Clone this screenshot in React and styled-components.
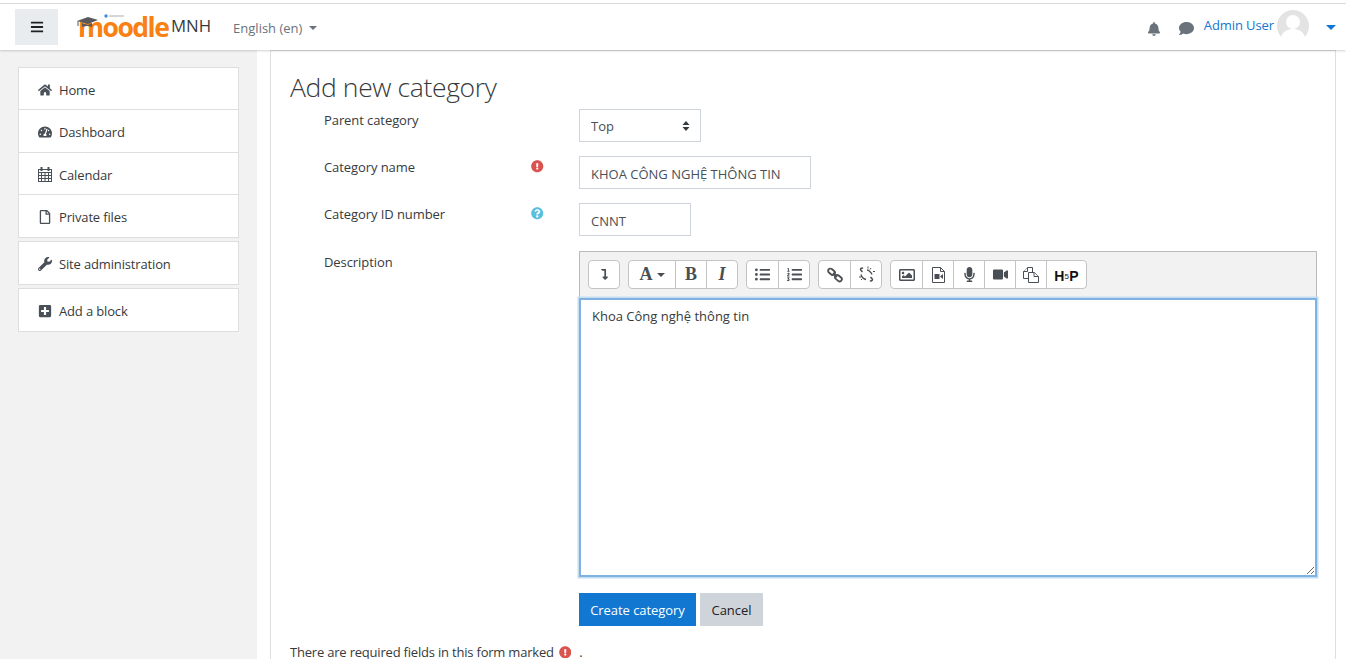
import React from 'react'
import styled, {createGlobalStyle} from 'styled-components'
import {
	FaBars, FaBell, FaComment, FaHome, FaTachometerAlt, FaRegFile, FaWrench,
	FaPlusSquare, FaExclamationCircle, FaQuestionCircle, FaLevelDownAlt, FaListUl, FaListOl,
	FaRegImage, FaMicrophone, FaVideo,
} from 'react-icons/fa'

const GlobalStyle = createGlobalStyle`
	html, body {
		margin: 0;
		height: 100%;
		overflow: hidden;
		background: #fff;
	}
	body {
		font-family: "Open Sans", "Noto Sans", sans-serif;
		font-size: 13px;
		letter-spacing: -.15px;
		color: #373a3c;
	}
	* { box-sizing: border-box; }
`

const TopLine = styled.div`
	height: 4px;
	border-bottom: 1px solid #dcdcdc;
	background: #fff;
`

const Navbar = styled.header`
	position: relative;
	z-index: 2;
	display: flex;
	align-items: center;
	height: 46px;
	padding: 0 10px 0 15px;
	background: #fff;
	box-shadow: 0 1px 2px rgba(0, 0, 0, .18);
`

const MenuButton = styled.div`
	display: flex;
	align-items: center;
	justify-content: center;
	width: 43px;
	height: 36px;
	margin-right: 19px;
	background: #e9ecef;
	color: #1d2125;
	font-size: 14px;
`

const Logo = styled.div`
	position: relative;
	width: 94px;
	height: 36px;
	display: flex;
	align-items: center;
`

const LogoWord = styled.span`
	font-weight: 700;
	font-size: 26.5px;
	letter-spacing: -1.5px;
	line-height: 36px;
	color: #f98012;
	margin: 0 0 0 1px;
`

const LogoHat = styled.svg`
	position: absolute;
	left: 0;
	top: 4px;
`

const SiteName = styled.span`
	font-size: 16.8px;
	letter-spacing: 0;
	margin-right: 22px;
	margin-top: -3px;
`

const Lang = styled.span`
	display: flex;
	align-items: center;
	gap: 7px;
	color: #6a737b;
	letter-spacing: 0;
	margin-top: 2px;
`

const Caret = styled.i`
	display: inline-block;
	width: 0;
	height: 0;
	border-left: ${props => props.size || 4}px solid transparent;
	border-right: ${props => props.size || 4}px solid transparent;
	border-top: ${props => props.size || 4}px solid ${props => props.color || 'currentColor'};
`

const Spacer = styled.div`
	flex: 1;
`

const NavIcon = styled.span`
	display: flex;
	color: #6a737b;
	font-size: ${props => props.size || 14}px;
	margin: 3px ${props => props.gap || 0}px 0 0;
`

const UserName = styled.span`
	color: #1177d1;
	letter-spacing: -.1px;
	margin: -5px 3px 0 0;
`

const Avatar = styled.svg`
	margin: -3px 17px 0 0;
`

const Page = styled.div`
	display: grid;
	grid-template-columns: 257px 1fr;
	height: 609px;
`

const Side = styled.aside`
	background: #f2f2f2;
	padding: 17px 18px 0;
`

const Block = styled.nav`
	width: 221px;
	margin-bottom: 3px;
	background: #fff;
	border: 1px solid #dedede;
`

const BlockItem = styled.div`
	display: flex;
	align-items: center;
	height: ${props => props.h || 42}px;
	padding: 2px 0 0 18px;
	color: #373a3c;
	border-top: ${props => props.first ? 'none' : '1px solid #dedede'};
`

const ItemIcon = styled.span`
	display: flex;
	justify-content: center;
	width: 15px;
	margin-right: 7px;
	font-size: 14px;
	color: #495057;
`

const Main = styled.main`
	padding: 0 10px 0 13px;
`

const Card = styled.section`
	height: 100%;
	padding: 17px 18px 0 19px;
	border: 1px solid #dedede;
	border-bottom: none;
	overflow: hidden;
`

const Title = styled.h2`
	margin: 0;
	font-size: 26.5px;
	font-weight: 300;
	letter-spacing: -.37px;
	line-height: 38px;
	height: 41px;
`

const FormRow = styled.div`
	display: grid;
	grid-template-columns: 34px 207px 48px 1fr;
	margin-bottom: ${props => props.gap || 14}px;
`

const Label = styled.label`
	grid-column: 2;
	line-height: 20px;
	margin-top: 1px;
	letter-spacing: -.08px;
`

const Marker = styled.span`
	grid-column: 3;
	display: flex;
	font-size: 12.5px;
	margin-top: 4px;
	color: ${props => props.color};
`

const Control = styled.div`
	grid-column: 4;
	position: relative;
	min-width: 0;
`

const Select = styled.select`
	appearance: none;
	display: block;
	width: 122px;
	height: 33px;
	padding: 0 11px;
	background: #fff;
	border: 1px solid #ced4da;
	border-radius: 0;
	color: #495057;
	font: inherit;
	letter-spacing: 0;
`

const SelectArrows = styled.svg`
	position: absolute;
	left: 103px;
	top: 12px;
	pointer-events: none;
`

const Input = styled.input`
	display: block;
	width: ${props => props.w}px;
	height: 33px;
	padding: 2px 11px 0;
	border: 1px solid #ced4da;
	color: #495057;
	font: inherit;
	letter-spacing: 0;
	outline: none;
`

const Toolbar = styled.div`
	display: flex;
	align-items: flex-start;
	gap: 8px;
	height: 47px;
	padding: 8px 8px 0;
	background: #f2f2f2;
	border: 1px solid #bbb;
	border-bottom-color: #d8d8d8;
`

const ToolGroup = styled.div`
	display: flex;
	height: 29px;
	background: #fff;
	border: 1px solid #c4c4c4;
	border-radius: 4px;
	overflow: hidden;
`

const ToolButton = styled.span`
	display: flex;
	align-items: center;
	justify-content: center;
	gap: 4px;
	width: ${props => props.w || 31}px;
	color: #4a4f55;
	font-size: 15px;
	border-left: ${props => props.first ? 'none' : '1px solid #c4c4c4'};
`

const SerifGlyph = styled.span`
	font-family: "Liberation Serif", serif;
	font-weight: 700;
	font-size: 18px;
	letter-spacing: 0;
	font-style: ${props => props.italic ? 'italic' : 'normal'};
`

const HfpGlyph = styled.span`
	font-family: "Liberation Sans", sans-serif;
	font-weight: 700;
	font-size: 14px;
	letter-spacing: .2px;
	color: #111;
	margin-top: 2px;
	& > small {
		font-size: 8px;
		font-weight: 400;
		vertical-align: 2px;
	}
`

const TextArea = styled.textarea`
	display: block;
	width: 100%;
	height: 279px;
	padding: 7px 11px;
	border: 2px solid #7fb2e0;
	box-shadow: 0 0 0 1.5px #c3def3;
	outline: none;
	color: #373a3c;
	font: inherit;
	letter-spacing: 0;
`

const Actions = styled.div`
	display: flex;
	gap: 4px;
	margin-top: 16px;
`

const Button = styled.button`
	height: 33px;
	padding: 0;
	width: ${props => props.w}px;
	border: none;
	background: ${props => props.primary ? '#1177d1' : '#ced4da'};
	color: ${props => props.primary ? '#fff' : '#1d2125'};
	font: inherit;
	letter-spacing: -.05px;
`

const Note = styled.p`
	display: flex;
	align-items: center;
	margin: 16px 0 0;
	line-height: 20px;
	letter-spacing: -.2px;
	white-space: nowrap;
`

const NoteIcon = styled.span`
	display: flex;
	margin: 0 8px 0 5px;
	font-size: 12.5px;
	color: #d9534f;
`

const CalendarIcon = () => (
	<svg width="14" height="15" viewBox="0 0 14 15" fill="none" stroke="#495057" strokeWidth="1">
		<rect x="0.500" y="2.500" width="13" height="12" />
		<path d="M0 5.500h14M0 8.500h14M0 11.500h14M3.500 5v10M7 5v10M10.500 5v10" />
		<path d="M3.500 0v4M10.500 0v4" strokeWidth="2" />
	</svg>
)

const LinkIcon = () => (
	<svg width="16" height="16" viewBox="0 0 16 16" fill="none" stroke="#4a4f55" strokeWidth="1.800">
		<rect x="0.800" y="2.500" width="7.500" height="4.500" rx="2.200" transform="rotate(40 4.500 4.700)" />
		<rect x="7.700" y="9" width="7.500" height="4.500" rx="2.200" transform="rotate(40 11.500 11.200)" />
		<path d="M6 6l4 4" />
	</svg>
)

const UnlinkIcon = () => (
	<svg width="17" height="17" viewBox="0 0 17 17" fill="none" stroke="#4a4f55" strokeWidth="1.500">
		<path d="M5 2.500c-1-1-2.500 0-2.500 1 0 .5.500 1 2 2.500M12 14.500c1 1 2.500 0 2.500-1 0-.5-.5-1-2-2.500" />
		<path d="M9 4c2 0 4.500 3 5 4.500M3 8.500C3.500 11 6 13 8 13.500" strokeWidth="1.300" />
		<path d="M10 .5v2M13 2l-1 1.500M1 11h2M3 14l1-1M15 5.500h2" strokeWidth="1" />
	</svg>
)

const FileVideoIcon = () => (
	<svg width="13" height="16" viewBox="0 0 13 16" fill="none" stroke="#4a4f55">
		<path d="M.5.500h8l4 4v11H.5z" />
		<path d="M8.500.500v4h4" />
		<path d="M2.500 7h5v5h-5zM8 9.500 11 7v5z" fill="#4a4f55" stroke="none" />
	</svg>
)

const CopyIcon = () => (
	<svg width="16" height="16" viewBox="0 0 16 16" fill="#fff" stroke="#4a4f55">
		<path d="M.5 11.500V4.500l4-4h5v11z" />
		<path d="M.5 4.500h4v-4" />
		<path d="M5.500 5.500h6l4 4v6h-10z" />
		<path d="M11 5.500v4h4.500" />
	</svg>
)

const navItems = [
	{icon: <FaHome />, text: 'Home', h: 41},
	{icon: <FaTachometerAlt />, text: 'Dashboard', h: 43},
	{icon: <CalendarIcon />, text: 'Calendar', h: 42},
	{icon: <FaRegFile />, text: 'Private files', h: 43},
]

export default function App() {
	return (
		<>
			<GlobalStyle />
			<TopLine />
			<Navbar>
				<MenuButton><FaBars /></MenuButton>
				<Logo>
					<LogoWord>moodle</LogoWord>
					<LogoHat width="50" height="16" viewBox="0 0 50 16">
						<path d="M0 8 11 4l10 3-10 4z" fill="#58595b" />
						<path d="M5 10v4c3-1.500 7-1.500 10 0v-4l-4 2z" fill="#58595b" />
						<path d="M1 8v5" stroke="#58595b" strokeWidth="1" />
						<circle cx="29" cy="3" r="1.700" fill="#3a8dde" />
						<path d="M32 3h15" stroke="#c9c9c9" strokeWidth="1.500" />
					</LogoHat>
				</Logo>
				<SiteName>MNH</SiteName>
				<Lang>English (en) <Caret /></Lang>
				<Spacer />
				<NavIcon gap={18}><FaBell /></NavIcon>
				<NavIcon gap={10} size={15}><FaComment /></NavIcon>
				<UserName>Admin User</UserName>
				<Avatar width="32" height="32" viewBox="0 0 32 32">
					<circle cx="16" cy="16" r="16" fill="#e3e3e3" />
					<circle cx="16" cy="12" r="7" fill="#fff" />
					<path d="M4 27c2-6 7-8 12-8s10 2 12 8a16 16 0 0 1-24 0z" fill="#fff" />
				</Avatar>
				<Caret size={5} color="#1177d1" />
			</Navbar>
			<Page>
				<Side>
					<Block>
						{navItems.map((item, i) => (
							<BlockItem key={item.text} first={i === 0} h={item.h}>
								<ItemIcon>{item.icon}</ItemIcon>{item.text}
							</BlockItem>
						))}
					</Block>
					<Block>
						<BlockItem first h={42}><ItemIcon><FaWrench /></ItemIcon>Site administration</BlockItem>
					</Block>
					<Block>
						<BlockItem first h={42}><ItemIcon><FaPlusSquare /></ItemIcon>Add a block</BlockItem>
					</Block>
				</Side>
				<Main>
					<Card>
						<Title>Add new category</Title>
						<FormRow>
							<Label>Parent category</Label>
							<Control>
								<Select defaultValue="top"><option value="top">Top</option></Select>
								<SelectArrows width="8" height="10" viewBox="0 0 8 10">
									<path d="M4 0 7.500 4H.5zM4 10 .5 6h7z" fill="#343a40" />
								</SelectArrows>
							</Control>
						</FormRow>
						<FormRow>
							<Label>Category name</Label>
							<Marker color="#d9534f"><FaExclamationCircle /></Marker>
							<Control><Input w={232} defaultValue="KHOA CÔNG NGHỆ THÔNG TIN" /></Control>
						</FormRow>
						<FormRow gap={15}>
							<Label>Category ID number</Label>
							<Marker color="#5bc0de"><FaQuestionCircle /></Marker>
							<Control><Input w={112} defaultValue="CNNT" /></Control>
						</FormRow>
						<FormRow gap={0}>
							<Label>Description</Label>
							<Control>
								<Toolbar>
									<ToolGroup><ToolButton first w={30}><FaLevelDownAlt size={11} /></ToolButton></ToolGroup>
									<ToolGroup>
										<ToolButton first w={46}><SerifGlyph>A</SerifGlyph><Caret /></ToolButton>
										<ToolButton><SerifGlyph>B</SerifGlyph></ToolButton>
										<ToolButton><SerifGlyph italic>I</SerifGlyph></ToolButton>
									</ToolGroup>
									<ToolGroup>
										<ToolButton first><FaListUl /></ToolButton>
										<ToolButton><FaListOl /></ToolButton>
									</ToolGroup>
									<ToolGroup>
										<ToolButton first><LinkIcon /></ToolButton>
										<ToolButton><UnlinkIcon /></ToolButton>
									</ToolGroup>
									<ToolGroup>
										<ToolButton first><FaRegImage size={16} /></ToolButton>
										<ToolButton><FileVideoIcon /></ToolButton>
										<ToolButton><FaMicrophone /></ToolButton>
										<ToolButton><FaVideo /></ToolButton>
										<ToolButton><CopyIcon /></ToolButton>
										<ToolButton w={40}><HfpGlyph>H<small>5</small>P</HfpGlyph></ToolButton>
									</ToolGroup>
								</Toolbar>
								<TextArea defaultValue="Khoa Công nghệ thông tin" />
								<Actions>
									<Button primary w={117}>Create category</Button>
									<Button w={63}>Cancel</Button>
								</Actions>
							</Control>
						</FormRow>
						<Note>There are required fields in this form marked<NoteIcon><FaExclamationCircle /></NoteIcon>.</Note>
					</Card>
				</Main>
			</Page>
		</>
	)
}
